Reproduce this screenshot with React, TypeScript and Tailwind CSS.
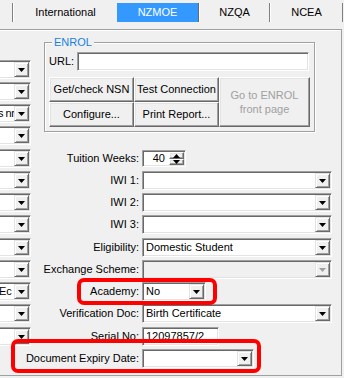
import React from 'react';

const rowH = ['h-[22px]', 'h-[22px]', 'h-[22px]', 'h-[23px]'];

function Arrow({ up, color = '#000' }: { up?: boolean; color?: string }) {
  return (
    <svg width="7" height="4" viewBox="0 0 7 4">
      {up ? <path d="M3.5 0L7 4H0z" fill={color} /> : <path d="M0 0h7L3.5 4z" fill={color} />}
    </svg>
  );
}

function DropBtn({ disabled }: { disabled?: boolean }) {
  return (
    <div className="w-[15px] h-full shrink-0 flex items-center justify-center bg-[#f0f0f0] border border-t-[#e3e3e3] border-l-[#e3e3e3] border-r-[#696969] border-b-[#696969] shadow-[inset_1px_1px_0_#ffffff,inset_-1px_-1px_0_#a0a0a0]">
      <Arrow color={disabled ? '#a0a0a0' : '#000'} />
    </div>
  );
}

const sunken =
  'border border-t-[#a0a0a0] border-l-[#a0a0a0] border-r-[#ffffff] border-b-[#ffffff] shadow-[inset_1px_1px_0_#696969,inset_-1px_-1px_0_#e3e3e3]';

function Combo({ w, text, disabled, textClass = 'pl-[2px]' }: { w: string; text?: string; disabled?: boolean; textClass?: string }) {
  return (
    <div className={`flex h-[19px] p-px ${disabled ? 'bg-[#f0f0f0]' : 'bg-white'} ${sunken} ${w}`}>
      <div className={`flex-1 overflow-hidden whitespace-nowrap leading-[15px] ${textClass}`}>{text}</div>
      <DropBtn disabled={disabled} />
    </div>
  );
}

const raised =
  'bg-[#f0f0f0] border border-t-[#ffffff] border-l-[#ffffff] border-r-[#696969] border-b-[#696969] shadow-[inset_-1px_-1px_0_#a0a0a0,inset_1px_1px_0_#e3e3e3]';

export default function App() {
  const leftTexts: Record<number, { t: string; c: string }> = {
    2: { t: 's nr', c: 'pl-[16px] tracking-[-0.5px]' },
    10: { t: 'Ec', c: 'pl-[17px]' },
  };
  return (
    <div className="relative w-[344px] h-[378px] overflow-hidden bg-[#f0f0f0] text-black font-['Liberation_Sans',Arial,sans-serif] text-[11px]">
      {/* Tabs */}
      <div className="flex h-[22px] pt-[3px]">
        <div className="w-[13px] h-[19px] border-r border-r-[#808080]" />
        <div className="w-[104px] h-[19px] border-l border-l-white flex items-center justify-center">International</div>
        <div className="w-[82px] h-[19px] bg-[#3399ff] text-white border-r border-r-[#696969] flex items-center justify-center">NZMOE</div>
        <div className="w-[71px] h-[19px] border-l border-l-white border-r border-r-[#808080] flex items-center justify-center">NZQA</div>
        <div className="w-[73px] h-[19px] border-l border-l-white border-r border-r-[#808080] flex items-center justify-center">NCEA</div>
      </div>

      {/* Panel */}
      <div className="mt-[7px] w-[342px] h-[347px] border-t border-r border-b border-[#a0a0a0] shadow-[inset_0_1px_0_#ffffff]">
        <div className="flex items-start">
          {/* Left column */}
          <div className="w-[30px] mt-[30px] flex flex-col">
            {Array.from({ length: 13 }).map((_, i) => (
              <div key={i} className={rowH[i % 4]}>
                <Combo w="w-[51px] -ml-[20px]" text={leftTexts[i]?.t} textClass={leftTexts[i]?.c ?? 'pl-[2px]'} />
              </div>
            ))}
          </div>

          {/* Right area */}
          <div className="ml-[14px] w-[297px] flex flex-col">
            {/* ENROL group */}
            <div className="relative mt-[12px] w-[271px] h-[90px] border border-[#a0a0a0] shadow-[inset_1px_1px_0_#ffffff,1px_1px_0_#ffffff] pl-[4px] pt-[9px]">
              <span className="absolute left-[7px] top-[-8px] px-[2px] bg-[#f0f0f0] text-[#1a7fe0] leading-[14px]">ENROL</span>
              <div className="flex items-center h-[19px]">
                <div className="w-[28px]">URL:</div>
                <div className={`w-[232px] h-[19px] bg-white ${sunken}`} />
              </div>
              <div className="mt-[6px] flex">
                <div className="grid grid-cols-[85px_85px] grid-rows-[25px_25px]">
                  <div className={`${raised} flex items-center justify-center`}>Get/check NSN</div>
                  <div className={`${raised} flex items-center justify-center`}>Test Connection</div>
                  <div className={`${raised} flex items-center justify-center`}>Configure...</div>
                  <div className={`${raised} flex items-center justify-center`}>Print Report...</div>
                </div>
                <div className={`${raised} w-[91px] h-[50px] flex flex-col items-center justify-center text-[#a0a0a0] leading-[14px] text-center`}>
                  <span>Go to ENROL</span>
                  <span>front page</span>
                </div>
              </div>
            </div>

            {/* Form rows */}
            <div className="mt-[17px] flex flex-col">
              {[
                {
                  label: 'Tuition Weeks:',
                  ctrl: (
                    <div className={`mt-px flex w-[44px] h-[17px] p-px bg-white ${sunken}`}>
                      <div className="flex-1 text-right pr-[4px] leading-[13px]">40</div>
                      <div className="w-[15px] flex flex-col">
                        <div className={`${raised} h-[7px] flex items-center justify-center`}>
                          <Arrow up />
                        </div>
                        <div className={`${raised} h-[6px] flex-1 flex items-center justify-center`}>
                          <Arrow />
                        </div>
                      </div>
                    </div>
                  ),
                },
                { label: 'IWI 1:', ctrl: <Combo w="w-[190px]" /> },
                { label: 'IWI 2:', ctrl: <Combo w="w-[190px]" /> },
                { label: 'IWI 3:', ctrl: <Combo w="w-[190px]" /> },
                { label: 'Eligibility:', ctrl: <Combo w="w-[190px]" text="Domestic Student" /> },
                { label: 'Exchange Scheme:', ctrl: <Combo w="w-[190px]" disabled /> },
                { label: 'Academy:', ctrl: <Combo w="w-[64px]" text="No" /> },
                { label: 'Verification Doc:', ctrl: <Combo w="w-[190px]" text="Birth Certificate" /> },
                {
                  label: 'Serial No:',
                  ctrl: (
                    <div className={`w-[77px] h-[19px] bg-white pl-[3px] leading-[17px] whitespace-nowrap overflow-hidden ${sunken}`}>12097857/2</div>
                  ),
                },
                { label: 'Document Expiry Date:', ctrl: <Combo w="w-[112px]" /> },
              ].map((r, i) => (
                <div key={i} className={`flex items-start ${rowH[i % 4]}`}>
                  <div className="w-[95px] h-[19px] mr-[3px] flex items-center justify-end whitespace-nowrap">{r.label}</div>
                  {r.ctrl}
                </div>
              ))}
            </div>
          </div>
        </div>
      </div>

      {/* Annotation highlights */}
      <div className="absolute left-[77px] top-[278px] w-[140px] h-[27px] border-[4px] border-[#ff0000] rounded-[7px]" />
      <div className="absolute left-[11px] top-[339px] w-[250px] h-[34px] border-[4px] border-[#ff0000] rounded-[7px]" />
    </div>
  );
}
